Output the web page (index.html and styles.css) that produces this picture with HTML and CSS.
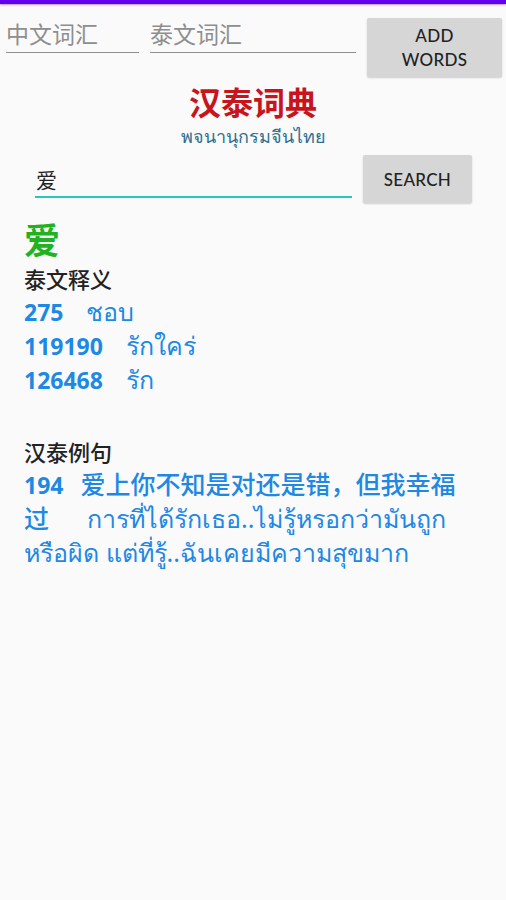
FILE: index.html
```html
<!DOCTYPE html>
<html lang="zh">
<head>
<meta charset="utf-8">
<title>汉泰词典</title>
<link rel="stylesheet" href="styles.css">
</head>
<body>
<div class="topbar"></div>
<div class="add-row">
  <div class="field field-zh">中文词汇</div>
  <div class="field field-th">泰文词汇</div>
  <div class="btn btn-add">ADD<br>WORDS</div>
</div>
<div class="title">汉泰词典</div>
<div class="subtitle">พจนานุกรมจีนไทย</div>
<div class="search-row">
  <div class="search-input">爱</div>
  <div class="btn btn-search">SEARCH</div>
</div>
<div class="result">
  <div class="word">爱</div>
  <div class="heading">泰文释义</div>
  <div class="line"><span class="num">275</span><span class="th">ชอบ</span></div>
  <div class="line"><span class="num">119190</span><span class="th">รักใคร่</span></div>
  <div class="line"><span class="num">126468</span><span class="th">รัก</span></div>
  <div class="spacer"></div>
  <div class="heading">汉泰例句</div>
  <div class="example"><span class="num">194</span><span class="zh">爱上你不知是对还是错，但我幸福<br>过</span><span class="th th-ex">การที่ได้รักเธอ..ไม่รู้หรอกว่ามันถูก<br>หรือผิด แต่ที่รู้..ฉันเคยมีความสุขมาก</span></div>
</div>
</body>
</html>
```
FILE: styles.css
```css
html, body {
  margin: 0;
  padding: 0;
}
body {
  background: #fafafa;
  font-family: "Noto Sans", "Noto Sans CJK SC", sans-serif;
  width: 506px;
  height: 900px;
  overflow: hidden;
}
.topbar {
  height: 4px;
  background: #6200ee;
  box-shadow: 0 1px 2px rgba(98, 0, 238, 0.4);
}
.add-row {
  display: flex;
  align-items: flex-start;
  padding: 14px 0 0 6px;
  gap: 11px;
}
.field {
  font-family: "Noto Sans CJK SC", sans-serif;
  font-size: 23px;
  line-height: 28px;
  color: #8e8e8e;
  padding: 1px 0 5px 0;
  border-bottom: 1.5px solid #8f8f8f;
}
.field-zh { width: 133px; }
.field-th { width: 206px; }
.btn {
  background: #d6d6d6;
  color: #222;
  font-family: "Lato", sans-serif;
  font-weight: 500;
  font-size: 17px;
  letter-spacing: 0.3px;
  text-align: center;
  border-radius: 2px;
  box-shadow: 0 1px 2px rgba(0,0,0,0.18);
  display: flex;
  align-items: center;
  justify-content: center;
}
.btn-add {
  width: 135px;
  height: 59px;
  line-height: 24px;
}
.title {
  margin-top: 3px;
  text-align: center;
  font-family: "Noto Sans CJK SC", sans-serif;
  font-weight: 700;
  font-size: 32px;
  line-height: 42px;
  color: #c8141c;
}
.subtitle {
  text-align: center;
  font-size: 18px;
  line-height: 28px;
  color: #2f6f8f;
}
.search-row {
  display: flex;
  align-items: flex-start;
  margin-top: 5px;
  padding-left: 35px;
  gap: 11px;
}
.search-input {
  width: 316px;
  font-family: "Noto Sans CJK SC", sans-serif;
  font-size: 21px;
  line-height: 28px;
  color: #222;
  padding: 10px 0 3px 1px;
  border-bottom: 2px solid #26c6bf;
}
.btn-search {
  width: 109px;
  height: 48px;
}
.result {
  padding-left: 24px;
  margin-top: 13px;
}
.word {
  font-family: "Noto Sans CJK SC", sans-serif;
  font-weight: 700;
  font-size: 36px;
  line-height: 45px;
  color: #1fb41f;
}
.heading {
  font-family: "Noto Sans CJK SC", sans-serif;
  font-weight: 500;
  font-size: 22px;
  line-height: 34px;
  color: #222;
}
.line, .example {
  font-size: 23px;
  line-height: 34px;
  color: #1e88e5;
}
.num {
  font-weight: 700;
}
.th {
  font-size: 25px;
  line-height: 20px;
}
.line .th {
  margin-left: 23px;
}
.spacer {
  height: 37px;
}
.example .zh {
  font-family: "Noto Sans CJK SC", sans-serif;
  font-weight: 500;
  font-size: 25px;
  line-height: 20px;
  margin-left: 17px;
}
.example .th-ex {
  margin-left: 38px;
}
```
